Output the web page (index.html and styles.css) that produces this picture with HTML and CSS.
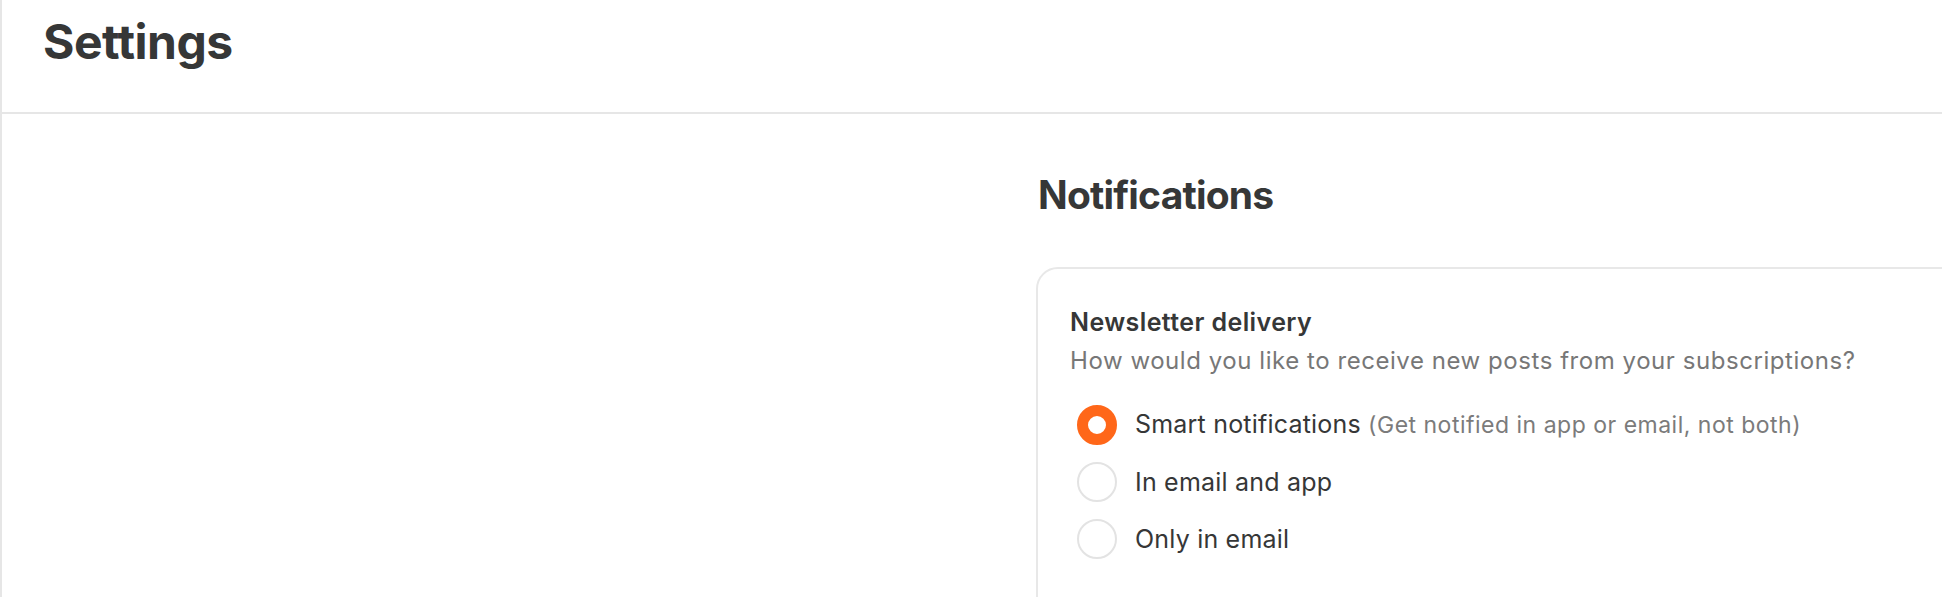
FILE: index.html
```html
<!DOCTYPE html>
<html lang="en">
<head>
<meta charset="utf-8">
<title>Settings</title>
<link rel="stylesheet" href="styles.css">
</head>
<body>
<div class="page">
  <header class="topbar">
    <h1 class="page-title">Settings</h1>
  </header>
  <main class="layout">
    <aside class="sidebar"></aside>
    <section class="content">
      <h2 class="section-title">Notifications</h2>
      <div class="card">
        <h3 class="card-title">Newsletter delivery</h3>
        <p class="card-sub">How would you like to receive new posts from your subscriptions?</p>
        <div class="options">
          <label class="option">
            <span class="radio checked"></span>
            <span class="opt-label">Smart notifications <span class="hint">(Get notified in app or email, not both)</span></span>
          </label>
          <label class="option">
            <span class="radio"></span>
            <span class="opt-label">In email and app</span>
          </label>
          <label class="option">
            <span class="radio"></span>
            <span class="opt-label">Only in email</span>
          </label>
        </div>
      </div>
    </section>
  </main>
</div>
</body>
</html>
```
FILE: styles.css
```css
html, body {
  margin: 0;
  padding: 0;
  background: #ffffff;
  overflow: hidden;
}
body {
  font-family: Inter, "Noto Sans", "Liberation Sans", sans-serif;
  color: #363737;
}
.page {
  border-left: 2px solid #e6e6e6;
  min-height: 597px;
  box-sizing: border-box;
}
.topbar {
  height: 112px;
  border-bottom: 2px solid #e6e6e6;
  box-sizing: content-box;
  padding-left: 41px;
}
.page-title {
  margin: 0;
  padding-top: 13px;
  font-size: 48px;
  line-height: 58px;
  font-weight: 700;
  letter-spacing: -0.5px;
  color: #363737;
}
.layout {
  display: grid;
  grid-template-columns: 1034px 940px;
}
.content {
  padding-top: 56px;
}
.section-title {
  margin: 0 0 47px 2px;
  font-size: 39px;
  line-height: 50px;
  font-weight: 700;
  letter-spacing: -0.8px;
  color: #363737;
}
.card {
  border: 2px solid #e8e8e8;
  border-radius: 22px;
  padding: 38px 35px 80px 32px;
}
.card-title {
  margin: 0;
  font-size: 25px;
  line-height: 30px;
  font-weight: 600;
  letter-spacing: 0.4px;
  color: #363737;
}
.card-sub {
  margin: 9px 0 20px;
  font-size: 24px;
  line-height: 30px;
  letter-spacing: 0.55px;
  color: #777777;
}
.options {
  display: flex;
  flex-direction: column;
}
.option {
  display: flex;
  align-items: center;
  gap: 18px;
  height: 57px;
  padding-left: 7px;
}
.radio {
  width: 40px;
  height: 40px;
  box-sizing: border-box;
  border-radius: 50%;
  border: 2px solid #e3e3e3;
  background: #fff;
  flex: none;
}
.radio.checked {
  border: 11.5px solid #ff6719;
}
.opt-label {
  font-size: 25px;
  line-height: 30px;
  letter-spacing: 0.2px;
  color: #363737;
}
.hint {
  font-size: 23px;
  letter-spacing: 0.5px;
  color: #7b7b7b;
}
```
